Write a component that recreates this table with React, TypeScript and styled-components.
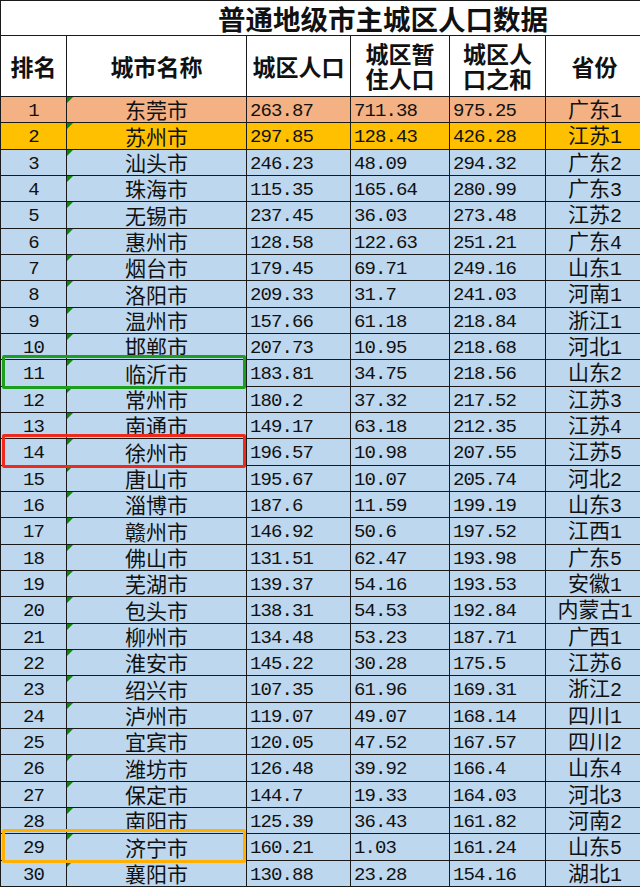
import React from 'react'
import styled, { createGlobalStyle } from 'styled-components'

const GlobalStyle = createGlobalStyle`
  html, body {
    margin: 0;
    padding: 0;
    background: #ffffff;
  }
  body {
    width: 640px;
    overflow: hidden;
  }
`

const CJK = `"Noto Sans CJK SC", "Noto Sans", sans-serif`
const NUM = `"Liberation Mono", "Noto Sans CJK SC", monospace`
const COLS = '66px 180px 104px 99px 96px 98px'
const ROW_H = 26.33
const TOP = 96

type Tone = 'salmon' | 'gold' | 'blue'
type Mark = 'green' | 'red' | 'orange'

const toneColor: Record<Tone, string> = {
  salmon: '#f4b183',
  gold: '#ffc000',
  blue: '#bdd7ee',
}

const markColor: Record<Mark, string> = {
  green: '#1e9e1e',
  red: '#ee2a1c',
  orange: '#ffb000',
}

const Sheet = styled.div`
  width: 643px;
  border-top: 1px solid #1a1a1a;
  border-left: 1px solid #1a1a1a;
  color: #111;
  overflow: hidden;
`

const TitleRow = styled.div`
  height: 34px;
  border-bottom: 1px solid #1a1a1a;
  display: flex;
  align-items: center;
  padding-left: 217px;
  font-family: ${CJK};
  font-weight: 700;
  font-size: 27.5px;
  line-height: 30px;
  white-space: nowrap;
`

const Grid = styled.div<{ $h: number; $bg: string }>`
  position: relative;
  display: grid;
  grid-template-columns: ${COLS};
  grid-template-rows: minmax(0, 1fr);
  height: ${(p) => p.$h}px;
  background: ${(p) => p.$bg};
`

const HeadCell = styled.div`
  display: flex;
  flex-direction: column;
  align-items: center;
  justify-content: center;
  text-align: center;
  border-right: 1px solid #1a1a1a;
  border-bottom: 1px solid #1a1a1a;
  font-family: ${CJK};
  font-weight: 700;
  font-size: 23px;
  line-height: 25px;
`

const Cell = styled.div<{ $align?: 'left' | 'center'; $cjk?: boolean }>`
  position: relative;
  display: flex;
  align-items: center;
  justify-content: ${(p) => (p.$align === 'left' ? 'flex-start' : 'center')};
  padding-left: ${(p) => (p.$align === 'left' ? '3px' : '0')};
  padding-top: ${(p) => (p.$cjk ? '0' : '3px')};
  border-right: 1px solid #1a1a1a;
  border-bottom: 1px solid #1a1a1a;
  font-family: ${(p) => (p.$cjk ? CJK : NUM)};
  font-size: ${(p) => (p.$cjk ? '21px' : '19px')};
  line-height: 1;
  font-weight: 400;
  letter-spacing: ${(p) => (p.$cjk ? '0' : '-0.9px')};
  white-space: nowrap;
  min-height: 0;
  box-sizing: border-box;
`

const ProvinceText = styled.span`
  font-family: ${CJK};
  font-size: 21px;
  line-height: 1;

  & > b {
    font-family: ${NUM};
    font-weight: 400;
    font-size: 20px;
    line-height: 1;
    letter-spacing: -1px;
  }
`

const Flag = styled.span`
  position: absolute;
  top: 0;
  left: 0;
  width: 0;
  height: 0;
  border-top: 6px solid #0a8a0a;
  border-right: 6px solid transparent;
`

const Highlight = styled.div<{ $c: Mark }>`
  position: absolute;
  z-index: 2;
  left: 1px;
  width: 244px;
  top: -5px;
  bottom: -2px;
  border: 3px solid ${(p) => markColor[p.$c]};
  border-radius: 2px;
  box-sizing: border-box;
  pointer-events: none;
`

type Row = [string, string, string, string, string]

const rows: Row[] = [
  ['东莞市', '263.87', '711.38', '975.25', '广东1'],
  ['苏州市', '297.85', '128.43', '426.28', '江苏1'],
  ['汕头市', '246.23', '48.09', '294.32', '广东2'],
  ['珠海市', '115.35', '165.64', '280.99', '广东3'],
  ['无锡市', '237.45', '36.03', '273.48', '江苏2'],
  ['惠州市', '128.58', '122.63', '251.21', '广东4'],
  ['烟台市', '179.45', '69.71', '249.16', '山东1'],
  ['洛阳市', '209.33', '31.7', '241.03', '河南1'],
  ['温州市', '157.66', '61.18', '218.84', '浙江1'],
  ['邯郸市', '207.73', '10.95', '218.68', '河北1'],
  ['临沂市', '183.81', '34.75', '218.56', '山东2'],
  ['常州市', '180.2', '37.32', '217.52', '江苏3'],
  ['南通市', '149.17', '63.18', '212.35', '江苏4'],
  ['徐州市', '196.57', '10.98', '207.55', '江苏5'],
  ['唐山市', '195.67', '10.07', '205.74', '河北2'],
  ['淄博市', '187.6', '11.59', '199.19', '山东3'],
  ['赣州市', '146.92', '50.6', '197.52', '江西1'],
  ['佛山市', '131.51', '62.47', '193.98', '广东5'],
  ['芜湖市', '139.37', '54.16', '193.53', '安徽1'],
  ['包头市', '138.31', '54.53', '192.84', '内蒙古1'],
  ['柳州市', '134.48', '53.23', '187.71', '广西1'],
  ['淮安市', '145.22', '30.28', '175.5', '江苏6'],
  ['绍兴市', '107.35', '61.96', '169.31', '浙江2'],
  ['泸州市', '119.07', '49.07', '168.14', '四川1'],
  ['宜宾市', '120.05', '47.52', '167.57', '四川2'],
  ['潍坊市', '126.48', '39.92', '166.4', '山东4'],
  ['保定市', '144.7', '19.33', '164.03', '河北3'],
  ['南阳市', '125.39', '36.43', '161.82', '河南2'],
  ['济宁市', '160.21', '1.03', '161.24', '山东5'],
  ['襄阳市', '130.88', '23.28', '154.16', '湖北1'],
]

const marks: Record<number, Mark> = { 11: 'green', 14: 'red', 29: 'orange' }

const toneOf = (rank: number): Tone => (rank === 1 ? 'salmon' : rank === 2 ? 'gold' : 'blue')

const rowHeight = (i: number) =>
  Math.round(TOP + ROW_H * (i + 1)) - Math.round(TOP + ROW_H * i)

const Province: React.FC<{ value: string }> = ({ value }) => {
  const m = value.match(/^(\D+)(\d+)$/)
  if (!m) return <ProvinceText>{value}</ProvinceText>
  return (
    <ProvinceText>
      {m[1]}
      <b>{m[2]}</b>
    </ProvinceText>
  )
}

export default function App() {
  return (
    <>
      <GlobalStyle />
      <Sheet>
        <TitleRow>普通地级市主城区人口数据</TitleRow>
        <Grid $h={61} $bg="#ffffff">
          <HeadCell>排名</HeadCell>
          <HeadCell>城市名称</HeadCell>
          <HeadCell>城区人口</HeadCell>
          <HeadCell>
            <span>城区暂</span>
            <span>住人口</span>
          </HeadCell>
          <HeadCell>
            <span>城区人</span>
            <span>口之和</span>
          </HeadCell>
          <HeadCell>省份</HeadCell>
        </Grid>
        {rows.map((r, i) => {
          const rank = i + 1
          const mark = marks[rank]
          return (
            <Grid key={rank} $h={rowHeight(i)} $bg={toneColor[toneOf(rank)]}>
              <Cell>{rank}</Cell>
              <Cell $cjk>
                <Flag />
                {r[0]}
              </Cell>
              <Cell $align="left">{r[1]}</Cell>
              <Cell $align="left">{r[2]}</Cell>
              <Cell $align="left">{r[3]}</Cell>
              <Cell $cjk>
                <Province value={r[4]} />
              </Cell>
              {mark && <Highlight $c={mark} />}
            </Grid>
          )
        })}
      </Sheet>
    </>
  )
}
